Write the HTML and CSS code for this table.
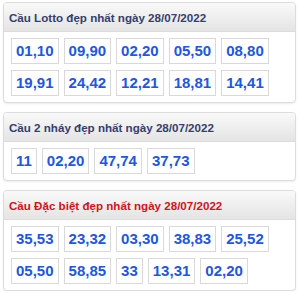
FILE: index.html
```html
<!DOCTYPE html>
<html lang="vi">
<head>
<meta charset="utf-8">
<title>Cầu Lotto</title>
<link rel="stylesheet" href="styles.css">
</head>
<body>
<div class="card">
  <div class="card-head">Cầu Lotto đẹp nhất ngày 28/07/2022</div>
  <div class="card-body">
    <span class="num">01,10</span><span class="num">09,90</span><span class="num">02,20</span><span class="num">05,50</span><span class="num">08,80</span>
    <span class="num">19,91</span><span class="num">24,42</span><span class="num">12,21</span><span class="num">18,81</span><span class="num">14,41</span>
  </div>
</div>
<div class="card">
  <div class="card-head">Cầu 2 nháy đẹp nhất ngày 28/07/2022</div>
  <div class="card-body">
    <span class="num">11</span><span class="num">02,20</span><span class="num">47,74</span><span class="num">37,73</span>
  </div>
</div>
<div class="card">
  <div class="card-head red">Cầu Đặc biệt đẹp nhất ngày 28/07/2022</div>
  <div class="card-body">
    <span class="num">35,53</span><span class="num">23,32</span><span class="num">03,30</span><span class="num">38,83</span><span class="num">25,52</span>
    <span class="num">05,50</span><span class="num">58,85</span><span class="num">33</span><span class="num">13,31</span><span class="num">02,20</span>
  </div>
</div>
</body>
</html>
```
FILE: styles.css
```css
html, body {
  margin: 0;
  background: #fff;
}
body {
  padding: 2px 4px 0 3px;
  font-family: "Liberation Sans", Arial, sans-serif;
  display: flex;
  flex-direction: column;
  gap: 9px;
}
.card {
  border: 1px solid #dcdcdc;
  border-radius: 4px;
  box-shadow: 0 1px 2px rgba(0,0,0,0.08);
  overflow: hidden;
  background: #fff;
}
.card-head {
  height: 28px;
  line-height: 29px;
  padding: 0 5px;
  font-size: 11.6px;
  font-weight: bold;
  color: #34406e;
  background: linear-gradient(#f9f9f9, #e4e4e4);
  border-bottom: 1px solid #dcdcdc;
  white-space: nowrap;
}
.card-head.red {
  color: #d3121b;
}
.card-body {
  display: flex;
  flex-wrap: wrap;
  gap: 6px 5px;
  padding: 6px 7px;
}
.num {
  display: block;
  height: 24px;
  line-height: 24px;
  padding: 0 4px;
  border: 1px solid #d9d9d9;
  font-size: 15px;
  font-weight: bold;
  color: #2157e0;
}
```
